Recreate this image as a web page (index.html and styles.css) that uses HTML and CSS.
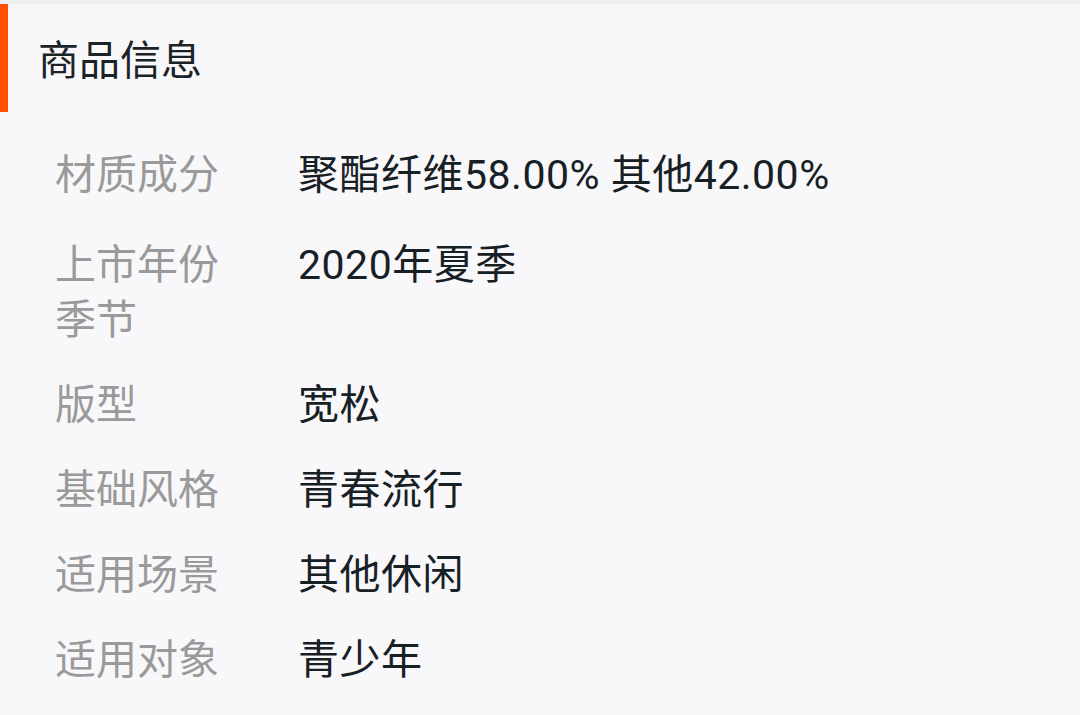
FILE: index.html
```html
<!DOCTYPE html>
<html lang="zh-CN">
<head>
<meta charset="utf-8">
<link rel="stylesheet" href="styles.css">
</head>
<body>
<div class="page">
  <div class="section-head">
    <span class="accent"></span>
    <h2 class="title">商品信息</h2>
  </div>
  <dl class="props">
    <div class="row row-first"><dt>材质成分</dt><dd>聚酯纤维58.00% 其他42.00%</dd></div>
    <div class="row"><dt>上市年份季节</dt><dd>2020年夏季</dd></div>
    <div class="row"><dt>版型</dt><dd>宽松</dd></div>
    <div class="row"><dt>基础风格</dt><dd>青春流行</dd></div>
    <div class="row"><dt>适用场景</dt><dd>其他休闲</dd></div>
    <div class="row"><dt>适用对象</dt><dd>青少年</dd></div>
  </dl>
</div>
</body>
</html>
```
FILE: styles.css
```css
html, body {
  margin: 0;
  padding: 0;
  background: #f8f8fa;
}
body {
  font-family: Roboto, "Noto Sans CJK SC", "Noto Sans", sans-serif;
  width: 1080px;
  height: 715px;
  overflow: hidden;
  border-top: 4px solid #efeff1;
  box-sizing: border-box;
}
.page {
  display: flex;
  flex-direction: column;
}
.section-head {
  display: flex;
  align-items: center;
  height: 108px;
}
.accent {
  width: 8px;
  align-self: stretch;
  background: #ff5000;
}
.title {
  margin: 0 0 0 30px;
  font-size: 41px;
  font-weight: 400;
  color: #1c2326;
  line-height: 1;
  padding-top: 6px;
}
.props {
  margin: 36px 0 0 0;
  padding: 0 0 0 55px;
  display: flex;
  flex-direction: column;
  gap: 30px;
}
.row {
  display: flex;
  align-items: flex-start;
}
.row-first {
  margin-bottom: 5px;
}
dt {
  width: 170px;
  margin-right: 73px;
  font-size: 41px;
  line-height: 55px;
  color: #9a9a9a;
}
dd {
  margin: 0;
  font-size: 41px;
  line-height: 55px;
  color: #172024;
  letter-spacing: 0.5px;
}
```
